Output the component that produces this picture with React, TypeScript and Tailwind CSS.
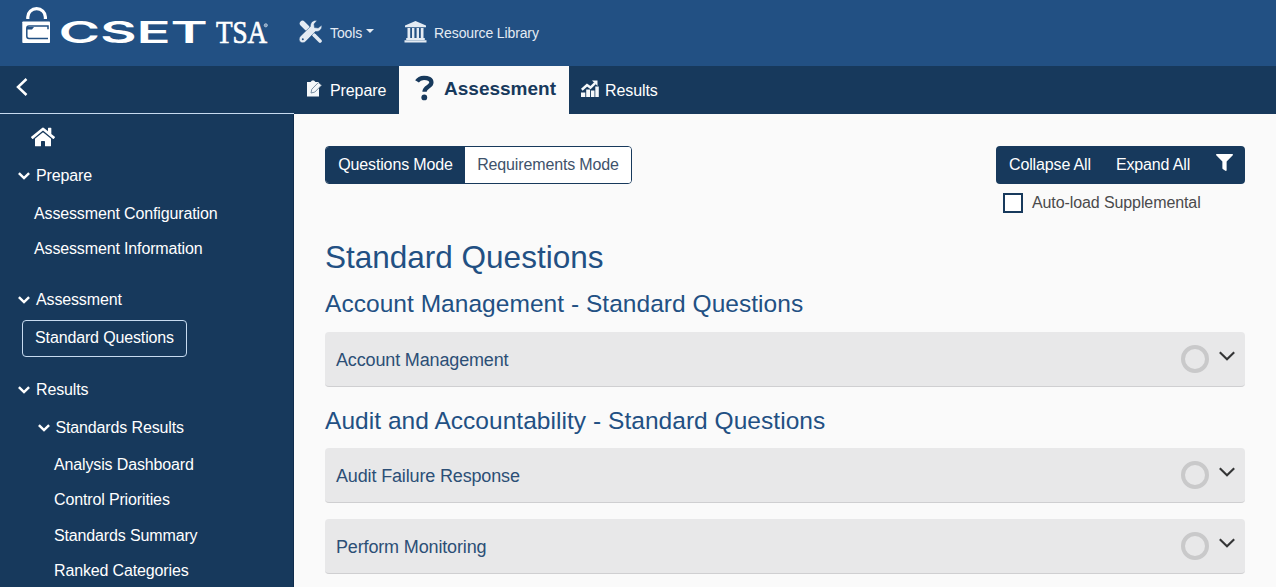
import { FaFilter, FaHome } from "react-icons/fa";

type NavEntry = { label: string; className: string };

function Chevron({ className }: { className: string }) {
  return (
    <svg className={className} viewBox="0 0 12 8" fill="none" stroke="currentColor" strokeWidth="2.5">
      <path d="M0.9 1.2 L6 6.1 L11.1 1.2" />
    </svg>
  );
}

function Logo() {
  return (
    <svg className="block h-[66px] w-[280px]" viewBox="0 0 280 66" fill="#fff">
      <path d="M27.8 19V17a8.8 8.3 0 0 1 17.6 0V19" fill="none" stroke="#fff" strokeWidth="3.2" />
      <rect x="22.3" y="21.5" width="27.7" height="21.5" rx="0.8" />
      <path d="M48 29.3V26H29q-2.2 0-2.200 2.200v8q0 2.200 2.200 2.200H48" fill="none" stroke="#225083" strokeWidth="1.5" />
      <path d="M27 27h7l-2 2.500h-5z" fill="#225083" />
      <text x="58.5" y="43.2" fontFamily="Inter, sans-serif" fontWeight="600" fontSize="30" textLength="149" lengthAdjust="spacingAndGlyphs">CSET</text>
      <text x="216" y="43" fontFamily="Liberation Serif, serif" fontSize="32.5" textLength="51" lengthAdjust="spacingAndGlyphs" stroke="#fff" strokeWidth=".7">TSA</text>
      <circle cx="265.8" cy="25.3" r="1.6" fill="#7f9dbd" stroke="#b7c8da" strokeWidth=".8" />
    </svg>
  );
}

function ToolsIcon() {
  return (
    <svg className="ml-[19px] mb-[4px] h-[23px] w-[23px]" viewBox="0 0 23 23">
      <path d="M3.5 3.5 L8 8" stroke="currentColor" strokeWidth="5.5" strokeLinecap="round" />
      <path d="M8 8 L16 16" stroke="currentColor" strokeWidth="2.8" />
      <path d="M15.3 15.3 L21 21" stroke="currentColor" strokeWidth="3.6" strokeLinecap="round" />
      <path
        d="M22.6 5.2 L19.2 8 L15.5 7.6 L15 4 L18 .6 C14.5-.3 11.2 2.2 11.4 6.6 L1.2 16.4 C-.3 18.2 0 20.800 1.400 22 C2.800 23.2 5.200 23 6.600 21.600 L16.400 11.500 C20.500 12 23.500 8.800 22.600 5.200Z"
        fill="currentColor"
        stroke="#225083"
        strokeWidth=".5"
      />
      <circle cx="3.8" cy="19.3" r="1" fill="#225083" />
    </svg>
  );
}

function LibraryIcon() {
  return (
    <svg className="mb-[2px] ml-[30px] h-[22px] w-[23px]" viewBox="0 0 23 22" fill="currentColor">
      <path d="M11.5 0 L22 4.5V6.2H1V4.5Z" />
      <path d="M3.500 7h2.700v10H3.500zM8 7h2.400v10H8zM12.600 7H15v10h-2.400zM16.800 7h2.700v10h-2.700z" />
      <path d="M2.200 17h18.600v1.900H2.200zM.5 19.300h22v2.200H.5z" />
    </svg>
  );
}

function Section({ label, className }: NavEntry) {
  return (
    <div className={`flex items-center leading-6 ${className}`}>
      <Chevron className="mr-[6px] h-[8px] w-[12px]" />
      {label}
    </div>
  );
}

function Sidebar() {
  return (
    <nav className="h-full w-[294px] shrink-0 overflow-hidden border-r border-[#0f2c4c] bg-[#17395c] text-[16px] tracking-[-0.14px] text-white">
      <FaHome className="mt-[11px] ml-[31px] h-[24px] w-[24px]" />
      <Section label="Prepare" className="mt-[15px] ml-[18px]" />
      <div className="mt-[14px] ml-[34px] leading-6">Assessment Configuration</div>
      <div className="mt-[11px] ml-[34px] leading-6">Assessment Information</div>
      <Section label="Assessment" className="mt-[27px] ml-[18px]" />
      <div className="mt-[8px] ml-[22px] flex h-[37px] w-[165px] items-center justify-center rounded border border-[#c7dbf0] pb-px">Standard Questions</div>
      <Section label="Results" className="mt-[21px] ml-[18px]" />
      <Section label="Standards Results" className="mt-[14px] ml-[37.500px]" />
      <div className="mt-[13px] ml-[54px] flex flex-col gap-[11.4px] leading-6">
        <div>Analysis Dashboard</div>
        <div>Control Priorities</div>
        <div>Standards Summary</div>
        <div>Ranked Categories</div>
      </div>
    </nav>
  );
}

function QuestionGroup({ label, className }: NavEntry) {
  return (
    <div className={`flex h-[55px] items-center rounded border-b border-[#cfcfd1] bg-[#e8e8e9] pl-[11px] text-[18px] tracking-[-0.15px] text-[#2c4f76] ${className}`}>
      <span className="pt-[2px]">{label}</span>
      <div className="ml-auto size-[28px] rounded-full border-[4px] border-[#c9c9ca]" />
      <svg className="mr-[10px] mb-[6px] ml-[10px] h-[10px] w-[16px]" viewBox="0 0 16 10" fill="none" stroke="#343536" strokeWidth="2.1">
        <path d="M.8 1.2 L8 8.3 L15.2 1.2" />
      </svg>
    </div>
  );
}

export default function App() {
  return (
    <div className="flex h-[587px] w-[1276px] flex-col overflow-hidden bg-[#fafafa] font-['Liberation_Sans',Arial,sans-serif]">
      <header className="flex h-[66px] shrink-0 items-center bg-[#225083] text-[14px] tracking-[-0.12px] text-[#e4ebf3]">
        <Logo />
        <ToolsIcon />
        <span className="ml-[8px]">Tools</span>
        <svg className="mb-[4px] ml-[4px] h-[4px] w-[8px]" viewBox="0 0 8 4" fill="currentColor"><path d="M0 0h8L4 4z" /></svg>
        <LibraryIcon />
        <span className="ml-[7px]">Resource Library</span>
      </header>
      <div className="flex h-[48px] shrink-0 bg-[#17395c] text-[16px] tracking-[-0.1px] text-white">
        <div className="flex w-[294px] items-center border-b border-[#c7dbf0] pl-[16px]">
          <svg className="mb-[6px] h-[18px] w-[12px]" viewBox="0 0 12 18" fill="none" stroke="currentColor" strokeWidth="2.5"><path d="M10.5 1 L2 9 L10.5 17" /></svg>
        </div>
        <div className="flex w-[105px] items-center pl-[12px]">
          <svg className="mb-[3px] h-[17px] w-[17px]" viewBox="0 0 17 17">
            <path d="M1 2h3.500L6 .5h2L9.500 2H13v14.500H1z" fill="#f5f8fa" />
            <path d="M5 13l.8-3.800 6.500-6.600 3.200 2.600-6.700 6.900z" fill="#f5f8fa" stroke="#6c8297" strokeWidth=".9" />
          </svg>
          <span className="ml-[7px] pt-px">Prepare</span>
        </div>
        <div className="flex w-[170px] items-center bg-[#fafafa] pl-[16px] text-[#17395c]">
          <svg className="mb-[5px] h-[26px] w-[19px]" viewBox="0 0 19 26">
            <path d="M2 6.4 C3.500 3.800 5.800 2.800 9 2.800 C13 2.800 16.400 4.300 16.400 7.600 C16.400 12 9.500 11.500 9.500 16.800" fill="none" stroke="currentColor" strokeWidth="4.3" />
            <circle cx="9.3" cy="22.4" r="2.9" fill="currentColor" />
          </svg>
          <span className="ml-[10px] pb-px text-[19px] font-bold tracking-[0.01px]">Assessment</span>
        </div>
        <div className="flex items-center pl-[12px]">
          <svg className="mb-[3px] h-[17px] w-[18px]" viewBox="0 0 18 17" fill="#f5f8fa">
            <path d="M0 12.500h4.300V17H0zM5.200 9.500h3.900V17H5.200zM10 10.500h3.500V17H10zM14.300 6.500h3.500V17h-3.500z" />
            <path d="M.8 9.700l5.200-4.700 3.500 2.600 4.600-4.500" fill="none" stroke="#f5f8fa" strokeWidth="2.5" />
            <path d="M11 .5h5.500V6z" />
          </svg>
          <span className="ml-[6px] pt-px">Results</span>
        </div>
      </div>
      <div className="flex min-h-0 flex-1">
        <Sidebar />
        <main className="min-w-0 flex-1 overflow-hidden pt-[32px] pr-[31px] pl-[31px]">
          <div className="flex items-start justify-between text-[16px] tracking-[-0.14px]">
            <div className="flex h-[38px] items-stretch overflow-hidden rounded border border-[#17395c]">
              <div className="flex w-[139px] items-center justify-center bg-[#17395c] pb-px text-white">Questions Mode</div>
              <div className="flex w-[166px] items-center justify-center bg-white pb-px text-[#3e526b]">Requirements Mode</div>
            </div>
            <div className="w-[249px]">
              <div className="flex h-[38px] items-center rounded bg-[#17395c] pl-[13px] text-white">
                <span className="pb-px">Collapse All</span>
                <span className="ml-[25px] pb-px">Expand All</span>
                <FaFilter className="mb-[5px] ml-auto mr-[12px] h-[17px] w-[17px]" />
              </div>
              <div className="mt-[7px] flex items-center pl-[7px] leading-6 tracking-[-0.1px] text-[#4a4a4c]">
                <div className="mr-[9px] size-[20px] border-2 border-[#17395c] bg-white" />
                Auto-load Supplemental
              </div>
            </div>
          </div>
          <h1 className="mt-[23px] text-[31.5px] leading-[38px] text-[#225083]">Standard Questions</h1>
          <h2 className="mt-[13px] text-[24.5px] leading-[29px] tracking-[0.04px] text-[#225083]">Account Management - Standard Questions</h2>
          <QuestionGroup label="Account Management" className="mt-[14px]" />
          <h2 className="mt-[19px] text-[24.5px] leading-[29px] tracking-[0.04px] text-[#225083]">Audit and Accountability - Standard Questions</h2>
          <QuestionGroup label="Audit Failure Response" className="mt-[13px]" />
          <QuestionGroup label="Perform Monitoring" className="mt-[16px]" />
        </main>
      </div>
    </div>
  );
}
